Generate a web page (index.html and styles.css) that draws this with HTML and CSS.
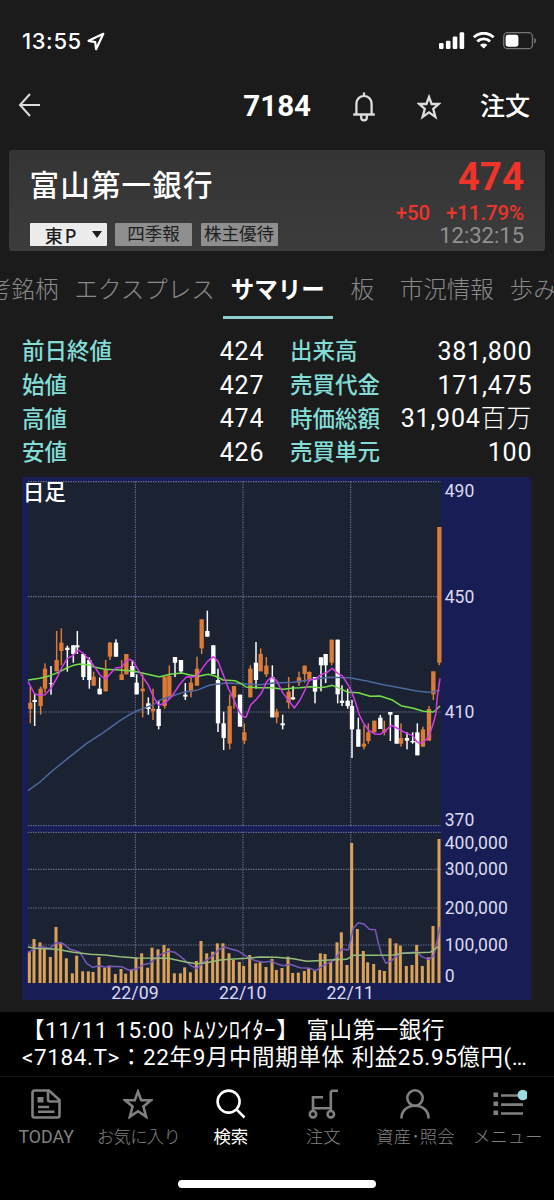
FILE: index.html
```
<!DOCTYPE html>
<html lang="ja">
<head>
    <meta charset="UTF-8">
    <meta name="viewport" content="width=device-width, initial-scale=1.0">
    <title>7184 富山第一銀行</title>
    <link rel="stylesheet" href="styles.css">
</head>
<body>

    <div class="status-bar">
        <span class="clock">13:55</span>
        <svg class="location" width="18" height="19" viewBox="0 0 18 19"><path d="M16.3 1.8 1.6 8.8l6.6 1.4.9 7z"/></svg>
        <svg class="status-icons" width="98" height="18" viewBox="0 0 98 18">
            <rect x="0" y="11" width="4.6" height="6" rx="1.2"/>
            <rect x="6.9" y="8.7" width="4.6" height="8.3" rx="1.2"/>
            <rect x="13.7" y="4.6" width="4.6" height="12.4" rx="1.2"/>
            <rect x="20.6" y="0.2" width="4.6" height="16.8" rx="1.2"/>
            <g class="wifi">
                <path d="M34.8 5.2a14.3 14.3 0 0 1 19.8 0"/>
                <path d="M38.3 9.4a9.3 9.3 0 0 1 12.8 0"/>
            </g>
            <path d="M44.7 16.6 41 12.9a5.4 5.4 0 0 1 7.4 0z"/>
            <rect class="battery" x="64.7" y="0.7" width="28.8" height="16" rx="4"/>
            <rect x="66.6" y="2.7" width="12.8" height="12" rx="2.4"/>
            <path class="battery-cap" d="M95.2 6v5.4c2.4-.8 2.4-4.6 0-5.4z"/>
        </svg>
    </div>

    <div class="header">
        <svg class="back" width="24" height="26" viewBox="0 0 24 26"><path d="M12 2 2 13l10 11M2.4 13H22"/></svg>
        <h1 class="code">7184</h1>
        <svg class="bell" width="24" height="30" viewBox="0 0 24 30">
            <path d="M1.2 22.5h21.6M4.400 22V11.500a7.600 7.600 0 0 1 15.200 0V22M12 .5v4M9.200 23.500v2a2.800 2.800 0 0 0 5.600 0v-2"/>
        </svg>
        <svg class="star" width="24" height="26" viewBox="0 0 24 26"><path d="m12 3 2.6 7h7.1l-5.500 4.800 2.200 8.200L12 18.400 5.600 23l2.200-8.200L2.300 10h7.100z"/></svg>
        <a class="order">注文</a>
    </div>

    <div class="quote-card">
        <div class="quote-left">
            <h2>富山第一銀行</h2>
            <div class="tags">
                <span class="tag market">東P<i class="caret"></i></span>
                <span class="tag">四季報</span>
                <span class="tag">株主優待</span>
            </div>
        </div>
        <div class="quote-right">
            <div class="price">474</div>
            <div class="change"><span>+50</span><span>+11.79%</span></div>
            <div class="time">12:32:15</div>
        </div>
    </div>

    <div class="tabs">
        <span class="tab">考銘柄</span>
        <span class="tab">エクスプレス</span>
        <span class="tab active">サマリー</span>
        <span class="tab">板</span>
        <span class="tab">市況情報</span>
        <span class="tab">歩み</span>
    </div>

    <div class="summary">
        <div class="item"><b>前日終値</b><span>424</span></div>
        <div class="item"><b>出来高</b><span>381,800</span></div>
        <div class="item"><b>始値</b><span>427</span></div>
        <div class="item"><b>売買代金</b><span>171,475</span></div>
        <div class="item"><b>高値</b><span>474</span></div>
        <div class="item"><b>時価総額</b><span>31,904<small>百万</small></span></div>
        <div class="item"><b>安値</b><span>426</span></div>
        <div class="item"><b>売買単元</b><span>100</span></div>
    </div>

    <svg id="chart" class="chart" width="509" height="523" viewBox="0 0 1527 1569">
        <rect class="plot" x="18" y="14" width="1239" height="1032"/>
        <rect class="plot" x="18" y="1066" width="1239" height="452"/>
        <path class="grid" d="M18 14H1257M18 359H1257M18 705H1257M18 1046H1257M18 1066H1257M18 1177H1257M18 1293H1257M18 1404H1257"/>
        <path class="grid" d="M340 14V1518M663 14V1518M986 14V1518"/>
        <rect class="divider" x="18" y="1049" width="1239" height="14"/>
        <g id="volumes"></g>
        <g id="candles"></g>
        <g id="lines"></g>
        <text class="chart-title" x="2" y="69">日足</text>
        <g class="axis">
            <text x="1268" y="60">490</text>
            <text x="1268" y="377">450</text>
            <text x="1268" y="723">410</text>
            <text x="1268" y="1047">370</text>
            <text x="1268" y="1115">400,000</text>
            <text x="1268" y="1195">300,000</text>
            <text x="1268" y="1311">200,000</text>
            <text x="1268" y="1422">100,000</text>
            <text x="1268" y="1514">0</text>
        </g>
        <g class="axis months">
            <text x="339" y="1566">22/09</text>
            <text x="662" y="1566">22/10</text>
            <text x="985" y="1566">22/11</text>
        </g>
    </svg>

    <div class="news">
        <p>【11/11 15:00 ﾄﾑｿﾝﾛｲﾀｰ】 富山第一銀行</p>
        <p>&lt;7184.T&gt;：22年9月中間期単体 利益25.95億円(…</p>
    </div>

    <div class="nav">
        <div class="nav-item">
            <svg width="30" height="30" viewBox="0 0 30 30">
                <path d="M18 1.5H3.5a2 2 0 0 0-2 2v23a2 2 0 0 0 2 2h23a2 2 0 0 0 2-2V11z"/>
                <path d="M17 2v8.5a2 2 0 0 0 2 2h9"/>
                <path d="M7 18h11M7 22.7h16.5"/>
                <rect class="fill" x="6.5" y="8" width="6" height="5.5"/>
            </svg>
            <span class="latin">TODAY</span>
        </div>
        <div class="nav-item">
            <svg width="30" height="30" viewBox="0 0 30 30"><path d="m15 2.6 3.2 8.6h9.7l-7.5 6.2 2.7 10.3L15 22.2l-8.1 5.5 2.7-10.3-7.5-6.2h9.7z"/></svg>
            <span class="tight">お気に入り</span>
        </div>
        <div class="nav-item selected">
            <svg width="30" height="30" viewBox="0 0 30 30"><path d="M20.700 20.700 28.500 28.500"/><circle cx="12.600" cy="12.600" r="11"/></svg>
            <span>検索</span>
        </div>
        <div class="nav-item">
            <svg width="30" height="30" viewBox="0 0 30 30">
                <circle cx="5" cy="25.2" r="3.2"/>
                <circle cx="22.8" cy="25.2" r="3.2"/>
                <path d="M5 22V8.2h10M5 19.3h17.8M22.8 22V3.5a1.7 1.7 0 0 1 1.7-1.7H30"/>
            </svg>
            <span>注文</span>
        </div>
        <div class="nav-item">
            <svg width="30" height="30" viewBox="0 0 30 30"><circle cx="15" cy="9" r="7.7"/><path d="M1.4 29.500c0-7.500 5.500-12.800 13.600-12.800s13.600 5.300 13.600 12.800"/></svg>
            <span>資産･照会</span>
        </div>
        <div class="nav-item">
            <svg width="38" height="30" viewBox="0 0 38 30">
                <path d="M12 6.500H34M12 15.600H34M12 24.500H34"/>
                <path class="fill" d="M4.500 3.500h4.600v4.600H4.500zM4.500 12.500h4.600v4.600H4.500zM4.500 21.500h4.600v4.600H4.500z"/>
                <circle class="badge" cx="33.800" cy="6" r="5.300"/>
            </svg>
            <span>メニュー</span>
        </div>
    </div>
    <div class="home-bar"></div>

    <script>
        const NS = "http://www.w3.org/2000/svg";

        // x, high, body top, body bottom, low, u = up / d = down
        const candles = [
            { dx: -6, rows: [
                [31,320,368,387,430,"u"], [44,340,360,366,438,"d"], [62,320,326,378,404,"u"], [75,250,266,326,338,"u"],
                [93,258,310,312,344,"d"], [110,153,240,274,274,"u"], [124,145,188,213,256,"u"], [142,197,203,210,275,"d"],
                [160,196,196,222,248,"d"], [172,153,196,202,222,"d"], [190,222,222,291,300,"d"], [208,232,240,300,326,"d"],
                [221,275,290,317,317,"u"], [239,292,326,343,343,"d"], [257,240,270,334,334,"u"], [270,186,188,230,240,"u"],
                [288,178,188,230,230,"d"], [305,240,283,300,300,"u"], [319,222,222,283,283,"u"], [337,240,258,291,291,"d"],
                [350,283,308,343,343,"d"], [368,283,326,334,412,"u"], [385,352,370,387,404,"d"], [399,326,386,394,420,"u"],
                [416,360,387,438,448,"d"]
            ] },
            { dx: 414, rows: [
                [14,290,290,378,386,"u"], [28,256,288,352,360,"u"], [45,231,231,248,291,"d"], [63,240,240,274,282,"d"],
                [76,309,344,350,360,"d"], [93,290,308,334,352,"u"], [111,230,266,317,317,"u"], [125,118,118,205,222,"u"],
                [142,92,153,170,170,"d"], [160,196,196,282,282,"d"], [174,266,300,430,456,"d"], [191,395,430,474,510,"d"],
                [209,344,378,491,508,"u"], [222,318,318,352,386,"u"], [240,344,344,440,440,"d"], [253,430,457,482,492,"u"],
                [271,256,266,352,352,"u"], [288,186,248,300,326,"d"], [302,205,222,274,274,"u"], [319,231,257,283,291,"u"],
                [337,256,291,412,412,"d"], [350,386,395,412,430,"u"], [368,404,430,436,448,"d"], [386,291,335,368,386,"u"],
                [399,318,352,358,360,"d"], [417,275,292,308,318,"u"], [434,257,257,282,308,"u"]
            ] },
            { dx: 834, rows: [
                [28,274,276,300,304,"u"], [45,291,291,335,370,"d"], [63,232,232,256,334,"d"], [77,222,222,256,309,"d"],
                [95,179,179,248,256,"u"], [113,179,179,343,370,"d"], [126,316,362,369,378,"d"], [143,326,362,378,386,"d"],
                [156,360,378,448,534,"d"], [175,413,448,500,500,"d"], [192,436,491,500,508,"u"], [205,430,457,483,491,"u"],
                [223,422,422,457,457,"u"], [241,405,413,447,447,"d"], [253,422,448,457,466,"u"], [271,396,396,404,483,"d"],
                [290,405,405,491,491,"d"], [303,430,474,491,500,"u"], [321,457,474,482,508,"d"], [338,457,483,487,491,"d"],
                [352,430,457,526,526,"d"], [369,440,448,500,500,"u"], [387,378,387,482,482,"u"], [400,274,274,343,360,"u"],
                [418,-159,-159,248,256,"u"]
            ] }
        ];

        // x, top of the bar
        const volumes = [
            { dx: -6, rows: [
                [28,395],[42,357],[60,367],[73,383],[91,411],[108,321],[122,367],[139,415],[157,460],[170,407],[188,454],
                [205,454],[219,456],[237,411],[254,443],[267,437],[286,462],[303,447],[317,461],[334,447],[348,413],[365,400],
                [383,443],[396,383],[414,388],[432,375],[445,385],[463,460],[481,460],[494,442],[511,457],[529,423],[543,363],
                [560,400],[578,395],[592,370],[609,370],[627,400],[640,420]
            ] },
            { dx: 624, rows: [
                [28,426],[41,438],[59,405],[77,430],[90,427],[108,441],[126,417],[139,450],[156,444],[174,410],[188,459],
                [205,458],[223,453],[236,444],[254,452],[271,400],[285,402],[302,425],[321,367],[334,337],[351,435],[365,69],
                [382,327],[400,393],[413,427],[431,432],[449,450],[463,453],[480,355],[498,370],[511,377],[529,438],[546,435],
                [560,375],[577,438],[595,412],[609,318],[627,57]
            ] }
        ];

        // moving averages
        const lines = [
            { name: "ma75", dy: 309, parts: [
                [-6, "24,632 60,606 100,570 150,530 200,490 250,458 300,422 330,403 350,393 400,374"],
                [414, "0,360 30,350 70,337 110,331 150,315 200,309 250,312 300,314 340,309 400,307"],
                [834, "0,304 40,298 90,292 150,293 200,303 250,314 300,323 350,333 385,337 400,335 420,331"]
            ] },
            { name: "ma25", dy: 309, parts: [
                [-6, "24,300 60,295 90,287 115,277 140,264 160,256 180,252 208,255 225,262 255,268 300,270 330,272 350,275 380,282 416,290"],
                [414, "0,290 30,283 65,279 90,285 115,289 145,283 165,288 190,300 225,302 245,312 258,321 300,323 335,323 370,328 400,324"],
                [834, "0,323 30,320 60,323 80,320 97,316 125,328 145,337 175,338 210,349 240,348 275,359 303,377 340,385 370,394 400,396 408,390 420,378"]
            ] },
            { name: "ma5", dy: 309, parts: [
                [-6, "24,305 44,342 60,346 75,344 93,325 110,295 124,265 142,235 157,228 175,210 190,220 208,240 225,262 240,285 257,297 272,280 288,264 305,262 319,242 330,238 340,244 350,262 365,287 385,315 400,350 416,376"],
                [414, "14,370 35,350 60,312 80,290 95,291 111,288 125,268 142,245 160,230 174,244 188,280 205,325 222,360 240,400 250,410 258,412 272,375 290,357 305,338 320,305 335,291 350,302 368,338 386,362 403,384"],
                [834, "0,360 15,330 28,300 45,298 63,284 80,278 97,265 113,280 126,287 143,312 155,335 168,372 178,405 192,432 208,452 225,462 240,463 253,455 275,436 290,444 303,451 320,460 338,467 350,485 358,490 372,485 387,468 400,430 408,400 412,350 420,295"]
            ] },
            { name: "vol5", dy: 1029, parts: [
                [-6, "24,397 45,386 65,380 90,385 108,368 130,371 150,388 180,397 200,430 218,442 240,437 255,442 270,439 305,440 325,450 348,448 370,434 390,430 410,412 425,402 445,394 465,397 485,412 510,435 530,446 550,427 575,410 595,390 612,380"],
                [624, "0,386 25,393 50,410 75,422 100,427 125,424 140,431 160,437 180,433 210,443 240,445 258,452 280,436 305,425 320,410 335,387 355,390 370,325 385,308 402,312 418,328 436,329 445,370 455,405 468,430 485,422 500,408 515,400 560,396 575,410 597,419 612,405 622,360 630,320"]
            ] },
            { name: "vol25", dy: 1029, parts: [
                [-6, "24,381 45,385 110,388 160,397 210,403 255,405 300,410 350,414 445,415 500,427 530,431 560,428 600,420"],
                [624, "0,418 50,415 90,411 140,412 190,416 230,424 300,420 350,418 370,406 430,406 490,405 520,400 600,397 625,380"]
            ] }
        ];

        function add(parent, tag, attrs) {
            const el = document.createElementNS(NS, tag);
            for (const key in attrs) {
                el.setAttribute(key, attrs[key]);
            }
            document.getElementById(parent).appendChild(el);
        }

        candles.forEach(({ dx, rows }) => {
            rows.forEach(([x, high, top, bottom, low, dir]) => {
                add("candles", "rect", { class: dir, x: x + dx - 2.2, y: high + 309, width: 4.4, height: low - high });
                add("candles", "rect", { class: dir, x: x + dx - 6.5, y: top + 309, width: 13, height: bottom - top });
            });
        });

        volumes.forEach(({ dx, rows }) => {
            rows.forEach(([x, top]) => {
                add("volumes", "rect", { x: x + dx - 4.5, y: top + 1029, width: 9, height: 489 - top });
            });
        });

        lines.forEach(({ name, dy, parts }) => {
            const points = parts.map(([dx, text]) => text.split(" ").map(pair => {
                const [x, y] = pair.split(",").map(Number);
                return (x + dx) + "," + (y + dy);
            }).join(" ")).join(" ");
            add("lines", "polyline", { class: name, points: points });
        });
    </script>

</body>
</html>
```
FILE: styles.css
```
body {
    margin: 0;
    width: 554px;
    height: 1200px;
    overflow: hidden;
    display: flex;
    flex-direction: column;
    background-color: #1b1b1b;
    color: #fff;
    font-family: Roboto, "Noto Sans CJK JP", sans-serif;
}

h1, h2, p {
    margin: 0;
}

svg {
    display: block;
    flex: none;
}

.status-bar {
    display: flex;
    align-items: center;
    height: 70px;
    padding: 12px 17px 0 22px;
    box-sizing: border-box;
}

.clock {
    font-family: Inter, sans-serif;
    font-size: 22px;
    font-weight: 500;
    letter-spacing: 0.6px;
}

.location {
    margin-left: 5px;
    fill: none;
    stroke: #fff;
    stroke-width: 2.2;
    stroke-linejoin: round;
}

.status-icons {
    margin-left: auto;
    fill: #fff;
}

.wifi {
    fill: none;
    stroke: #fff;
    stroke-width: 2.9;
}

.status-icons .battery {
    fill: none;
    stroke: #777;
    stroke-width: 1.3;
}

.status-icons .battery-cap {
    fill: #777;
}

.header {
    display: flex;
    align-items: center;
    height: 80px;
    padding: 0 24px 9px 18px;
    box-sizing: border-box;
}

.header svg {
    fill: none;
    stroke: #ddd;
    stroke-width: 2.3;
}

.header .back {
    margin-top: -1px;
    stroke-width: 2;
}

.code {
    margin-left: auto;
    font-size: 29.5px;
    line-height: 40px;
    font-weight: 700;
}

.header .bell {
    margin: 2px 0 0 41px;
}

.header .star {
    margin: 2px 0 0 41px;
}

.order {
    margin: 2px 0 0 39px;
    font-size: 25px;
    line-height: 36px;
    font-weight: 500;
}

.quote-card {
    display: flex;
    justify-content: space-between;
    height: 101px;
    margin: 0 9px;
    padding: 0 21px 0 20.5px;
    box-sizing: border-box;
    border-radius: 3px;
    background: linear-gradient(#343434, #3c3c3c);
}

.quote-left h2 {
    margin-top: 14px;
    font-size: 29.5px;
    line-height: 44px;
    font-weight: 500;
    letter-spacing: 1.2px;
}

.tags {
    display: flex;
    gap: 8.5px;
    margin-top: 15px;
}

.tag {
    width: 77px;
    height: 23px;
    border-radius: 1px;
    background-color: #8f8f8f;
    color: #1e1e1e;
    font-size: 17.5px;
    line-height: 22px;
    text-align: center;
    white-space: nowrap;
}

.tag.market {
    display: flex;
    align-items: center;
    justify-content: flex-end;
    padding-right: 5px;
    box-sizing: border-box;
    background-color: #ececec;
    font-family: "Noto Sans CJK JP", sans-serif;
    font-size: 18px;
    font-weight: 500;
    letter-spacing: 2px;
}

.caret {
    margin-left: 13px;
    border: 5.5px solid transparent;
    border-top: 7px solid #1e1e1e;
    border-bottom: 0;
}

.quote-right {
    text-align: right;
    white-space: nowrap;
}

.price {
    margin-top: 6px;
    font-size: 38.5px;
    line-height: 42px;
    font-weight: 700;
    color: #f0342a;
}

.change {
    display: flex;
    justify-content: flex-end;
    gap: 16px;
    margin-top: 3px;
    font-size: 20.3px;
    line-height: 24px;
    font-weight: 500;
    color: #f0342a;
}

.time {
    font-size: 22px;
    line-height: 22px;
    color: #919191;
}

.tabs {
    display: flex;
    flex: none;
    height: 68px;
    margin-left: -20px;
    overflow: hidden;
}

.tab {
    flex: none;
    min-width: 43px;
    padding: 0 8px;
    text-align: center;
    font-size: 23.5px;
    line-height: 78px;
    font-weight: 300;
    color: #8a8a8a;
}

.tab.active {
    height: 65px;
    border-bottom: 3px solid #8fcfcf;
    color: #fff;
    font-weight: 700;
}

.summary {
    display: grid;
    grid-template-columns: 241.5px 241.5px;
    column-gap: 26.5px;
    grid-auto-rows: 33.7px;
    margin: 15px 0 0 22px;
    height: 143px;
}

.item {
    display: flex;
    justify-content: space-between;
    align-items: center;
    white-space: nowrap;
}

.item b {
    margin-top: -3px;
    font-size: 22.5px;
    font-weight: 500;
    color: #83dcd6;
}

.item span {
    margin: 1px -0.8px 0 0;
    font-size: 25px;
    line-height: 33px;
    letter-spacing: 0.8px;
}

.item small {
    font-size: 25px;
    font-weight: 300;
}

.chart {
    margin-left: 22px;
    background-color: #181e55;
}

.plot {
    fill: #1b2333;
}

.divider {
    fill: #181e55;
}

.grid {
    fill: none;
    stroke: #6a7396;
    stroke-width: 3.5;
    stroke-dasharray: 4 3.5;
}

#volumes {
    fill: #dca156;
}

.u {
    fill: #dc7a38;
}

.d {
    fill: #fff;
}

#lines {
    fill: none;
    stroke-width: 4.5;
    stroke-linejoin: round;
}

.ma5 {
    stroke: #d53be8;
}

.ma25 {
    stroke: #74de4a;
}

.ma75 {
    stroke: #4d689f;
}

.vol5 {
    stroke: #7659b8;
}

.vol25 {
    stroke: #96bd78;
}

.chart-title {
    fill: #fff;
    font-size: 65px;
    font-weight: 500;
}

.axis {
    fill: #dcdcee;
    font-size: 52.5px;
    letter-spacing: 0.3px;
}

.months {
    text-anchor: middle;
    font-size: 53px;
}

.news {
    height: 65px;
    margin-top: 12px;
    padding: 5px 0 0 22px;
    box-sizing: border-box;
    background-color: #000;
    border-bottom: 1px solid #141414;
    font-size: 22.5px;
    line-height: 27px;
    letter-spacing: 0.6px;
    word-spacing: 1px;
    white-space: nowrap;
}

.nav {
    display: grid;
    grid-template-columns: repeat(6, 1fr);
    height: 95px;
    padding-top: 12px;
    box-sizing: border-box;
    background-color: #000;
}

.nav-item {
    display: flex;
    flex-direction: column;
    align-items: center;
    color: #808080;
    font-size: 17.4px;
    line-height: 24px;
    font-weight: 300;
    white-space: nowrap;
}

.nav-item svg {
    fill: none;
    stroke: currentColor;
    stroke-width: 2.6;
}

.nav-item span {
    margin-top: 6px;
}

.nav-item .latin {
    font-size: 17.8px;
    font-weight: 400;
}

.nav-item .tight {
    letter-spacing: -0.7px;
}

.nav-item .fill {
    fill: currentColor;
    stroke: none;
}

.nav-item .badge {
    fill: #9adbe2;
    stroke: none;
}

.nav-item.selected {
    color: #fff;
    font-weight: 400;
}

.home-bar {
    flex: 1;
    background-color: #000;
}

.home-bar::before {
    content: "";
    display: block;
    width: 198px;
    height: 8px;
    margin: 8px auto 0;
    border-radius: 4px;
    background-color: #fff;
}
```
